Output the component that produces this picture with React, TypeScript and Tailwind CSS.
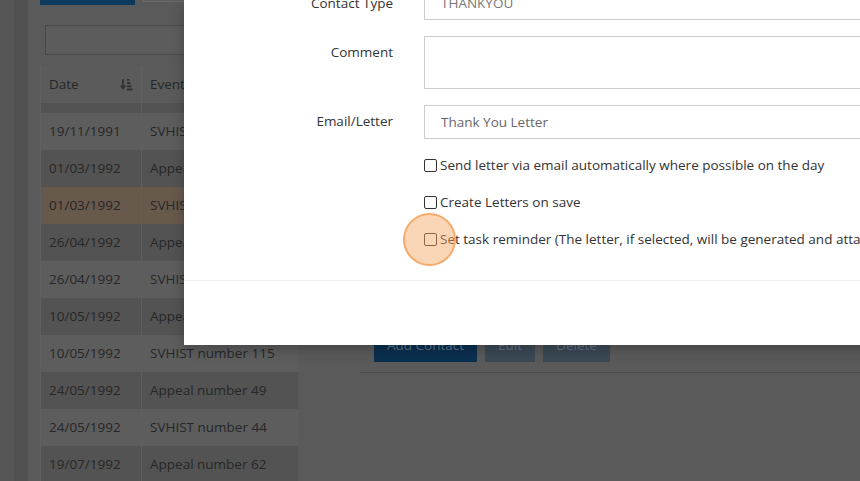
import React from "react";

const rows = [
  { date: "19/11/1991", event: "SVHIST number 12" },
  { date: "01/03/1992", event: "Appeal number 21" },
  { date: "01/03/1992", event: "SVHIST number 30", active: true },
  { date: "26/04/1992", event: "Appeal number 37" },
  { date: "26/04/1992", event: "SVHIST number 98" },
  { date: "10/05/1992", event: "Appeal number 41" },
  { date: "10/05/1992", event: "SVHIST number 115" },
  { date: "24/05/1992", event: "Appeal number 49" },
  { date: "24/05/1992", event: "SVHIST number 44" },
  { date: "19/07/1992", event: "Appeal number 62" },
];

function SortIcon() {
  return (
    <svg width="13" height="13" viewBox="0 0 13 13" className="text-[#2f2f2f]">
      <path d="M3 1v9M0.8 7.6 3 10.5 5.2 7.6" stroke="currentColor" strokeWidth="1.6" fill="none" />
      <rect x="7" y="1" width="2.5" height="1.8" fill="currentColor" />
      <rect x="7" y="4.2" width="3.5" height="1.8" fill="currentColor" />
      <rect x="7" y="7.4" width="4.5" height="1.8" fill="currentColor" />
      <rect x="7" y="10.6" width="5.5" height="1.8" fill="currentColor" />
    </svg>
  );
}

function Check({ label }: { label: string }) {
  return (
    <label className="flex h-[20px] items-center text-[13.5px] text-[#333] whitespace-nowrap">
      <span className="mr-[3px] h-[13px] w-[13px] shrink-0 rounded-[2px] border border-[#333] bg-white" />
      {label}
    </label>
  );
}

export default function App() {
  return (
    <div
      className="relative h-[481px] w-[860px] overflow-hidden bg-[#5a5a5a]"
      style={{ fontFamily: '"Open Sans", "Noto Sans", sans-serif' }}
    >
      <div className="flex h-full">
        <div className="flex h-full w-[28px] shrink-0">
          <div className="w-[14px] bg-[#565656]" />
          <div className="w-[14px] bg-[#505050]" />
        </div>

        <div className="flex flex-1 pl-[12px]">
          {/* list column */}
          <div className="w-[258px] shrink-0">
            <div className="-mt-[29px] flex h-[34px] gap-[8px]">
              <div className="h-[34px] w-[95px] bg-[#0b3a5e]" />
              <div className="h-[31px] w-[60px] border border-[#6a6a6a] bg-[#5d5d5d]" />
            </div>
            <div className="ml-[5px] mt-[20px] h-[30px] border border-[#484848] bg-[#5c5c5c]" />
            <div className="mt-[11px] border-l border-[#606060] text-[13.5px] text-[#272727]">
              <div className="flex h-[37px] bg-[#5b5b5b]">
                <div className="flex w-[101px] items-center justify-between border-r border-[#616161] pl-[8px] pr-[8px]">
                  <span>Date</span>
                  <SortIcon />
                </div>
                <div className="flex flex-1 items-center pl-[8px]">Event</div>
              </div>
              <div className="flex h-[10px] bg-[#535353]">
                <div className="w-[101px] border-r border-[#5c5c5c]" />
              </div>
              {rows.map((r, i) => (
                <div
                  key={i}
                  className={
                    "flex h-[37px] " +
                    (r.active ? "bg-[#67594c]" : i % 2 === 0 ? "bg-[#5d5d5d]" : "bg-[#535353]")
                  }
                >
                  <div className="flex w-[101px] items-center border-r border-[#5f5f5f] pl-[8px]">{r.date}</div>
                  <div className="flex flex-1 items-center pl-[8px] whitespace-nowrap">{r.event}</div>
                </div>
              ))}
            </div>
          </div>

          {/* detail column */}
          <div className="ml-[62px] flex-1">
            <div className="mt-[328px] flex gap-[8px] pl-[14px] text-[13.5px]">
              <div className="flex h-[34px] w-[103px] items-center justify-center bg-[#0b2f4f] text-[#5f7487]">Add Contact</div>
              <div className="flex h-[34px] w-[50px] items-center justify-center bg-[#3b4956] text-[#65727f]">Edit</div>
              <div className="flex h-[34px] w-[67px] items-center justify-center bg-[#3b4956] text-[#65727f]">Delete</div>
            </div>
            <div className="mt-[10px] border-t border-[#4d4d4d]" />
          </div>
        </div>
      </div>

      {/* modal */}
      <div className="absolute left-[184px] top-0 h-[345px] w-[720px] bg-white shadow-[0_4px_12px_rgba(0,0,0,0.25)]">
        <div className="-mt-[14px] flex flex-col gap-[16px] text-[13.5px] text-[#333]">
          <div className="flex">
            <div className="w-[209px] pt-[7px] text-right leading-[20px]">Contact Type</div>
            <div className="ml-[31px] flex h-[34px] flex-1 items-center border border-[#ccc] pl-[16px] text-[#777]">THANKYOU</div>
          </div>
          <div className="flex">
            <div className="w-[209px] pt-[6px] text-right leading-[20px]">Comment</div>
            <div className="ml-[31px] h-[53px] flex-1 border border-[#ccc]" />
          </div>
          <div className="flex">
            <div className="w-[209px] pt-[6px] text-right leading-[20px]">Email/Letter</div>
            <div className="ml-[31px] flex h-[34px] flex-1 items-center border border-[#ccc] pl-[16px] text-[#666]">Thank You Letter</div>
          </div>
        </div>
        <div className="ml-[240px] mt-[16px] flex flex-col gap-[17px]">
          <Check label="Send letter via email automatically where possible on the day" />
          <Check label="Create Letters on save" />
          <Check label="Set task reminder (The letter, if selected, will be generated and attached to the task)" />
        </div>
        <div className="mt-[31px] border-t border-[#eee]" />
      </div>

      {/* click highlight */}
      <div className="pointer-events-none absolute left-[403px] top-[213px] h-[53px] w-[53px] rounded-full border-2 border-[#f4a05a]/80 bg-[#f7a55e]/45" />
    </div>
  );
}
